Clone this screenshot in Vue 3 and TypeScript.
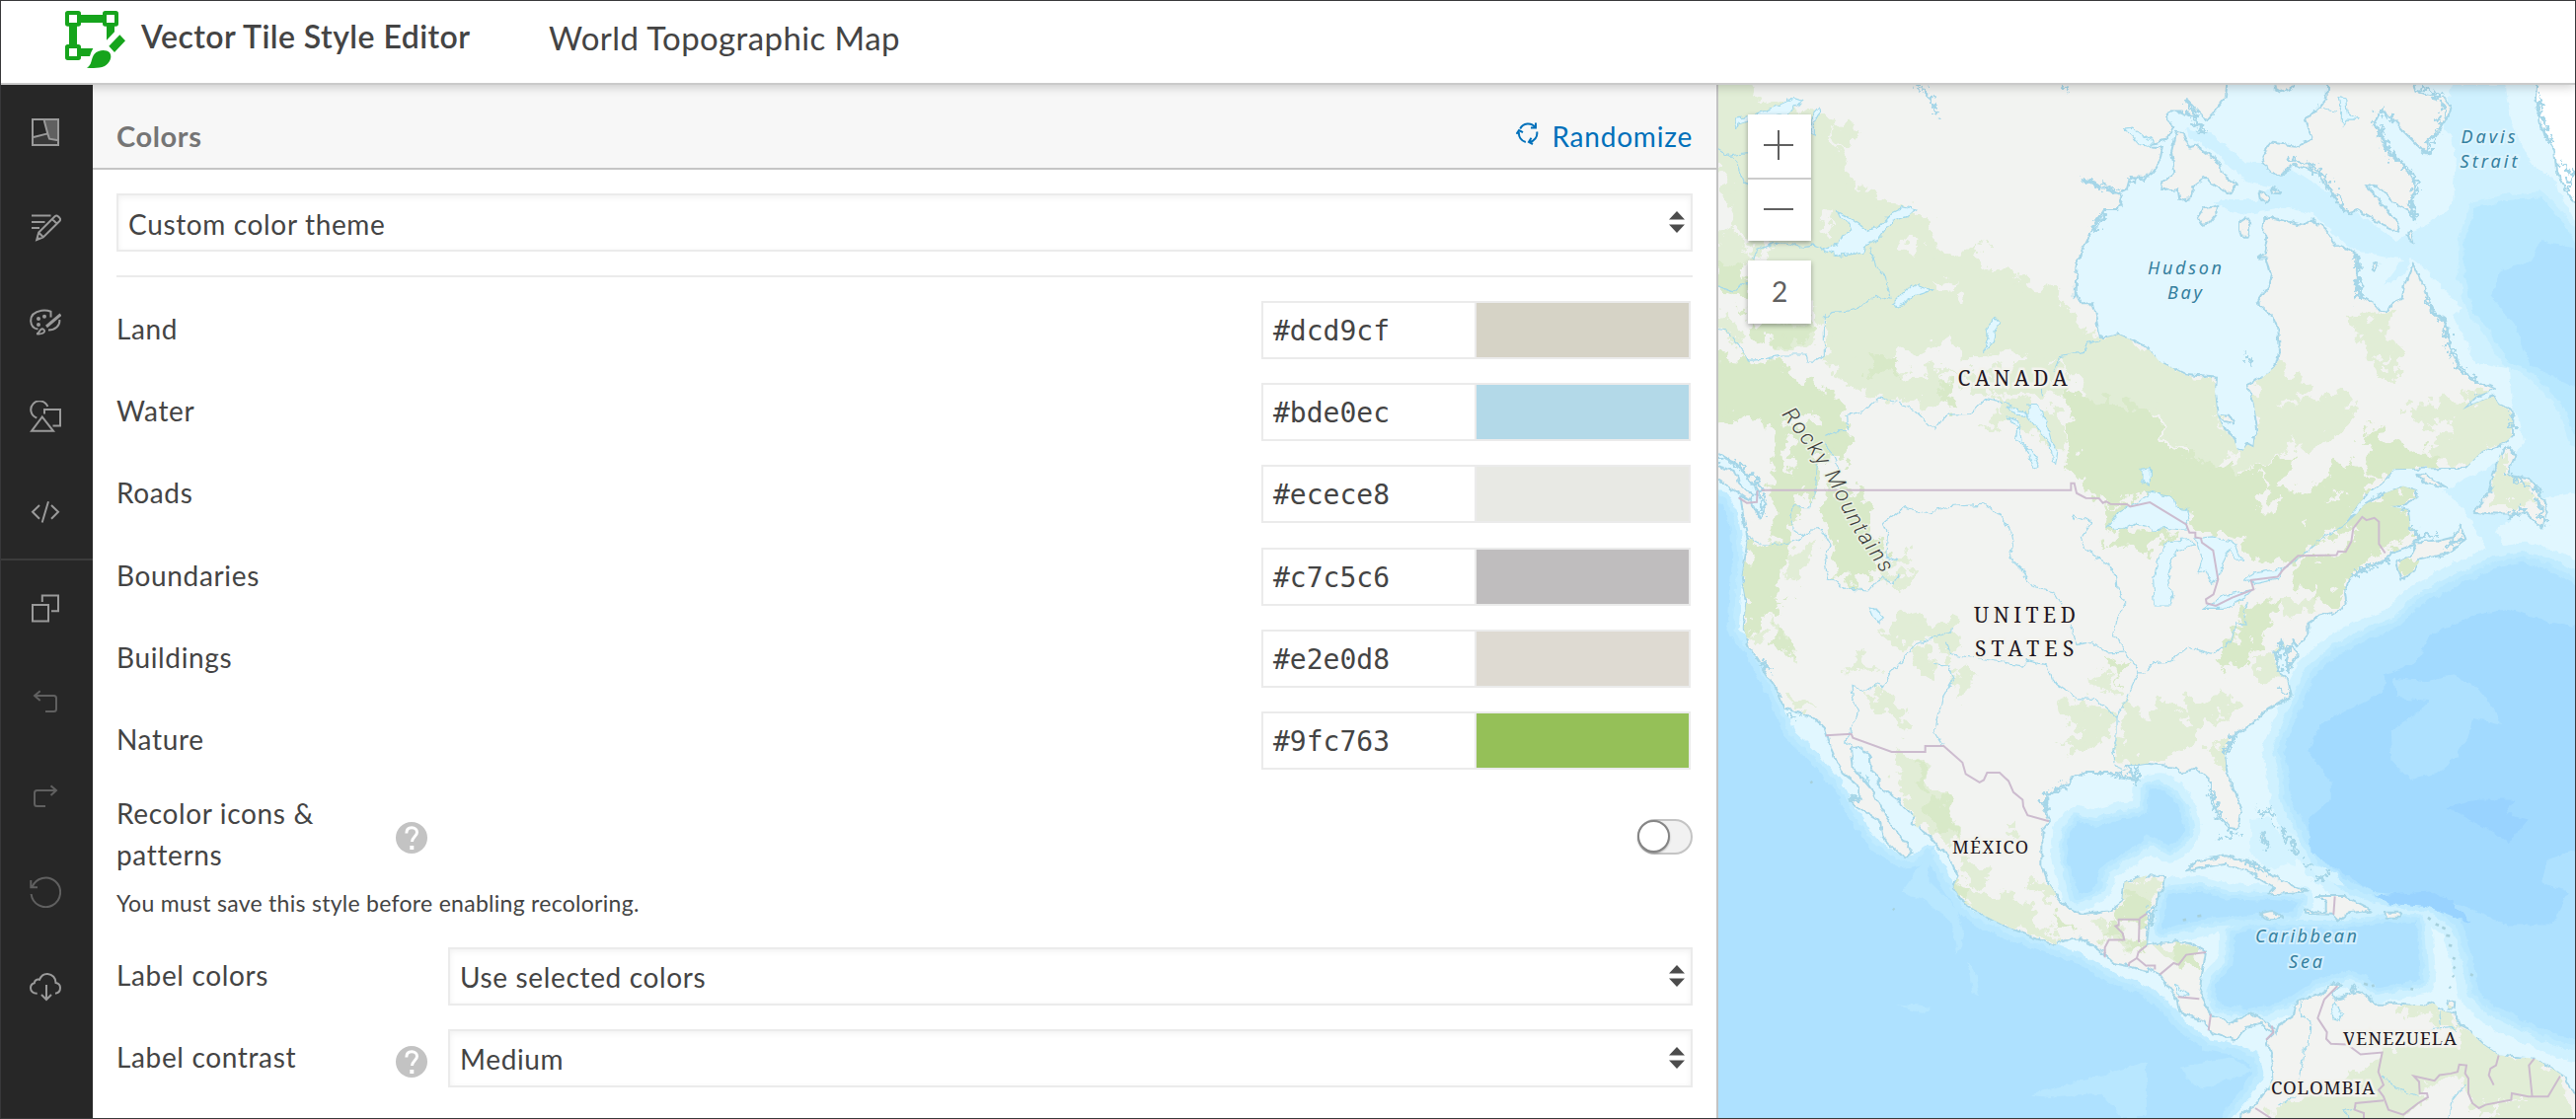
<script setup lang="ts">
interface ColorRow { name: string; hex: string; swatch: string }
interface MapLabel { text: string; x: number; y: number; width: number; size: number; kind: 'country' | 'water' }
interface Shape { d: string }

const colorRows: ColorRow[] = [
  { name: 'Land', hex: '#dcd9cf', swatch: '#d6d3c6' },
  { name: 'Water', hex: '#bde0ec', swatch: '#b3d9e8' },
  { name: 'Roads', hex: '#ecece8', swatch: '#e8e9e4' },
  { name: 'Boundaries', hex: '#c7c5c6', swatch: '#bfbdbe' },
  { name: 'Buildings', hex: '#e2e0d8', swatch: '#dedad2' },
  { name: 'Nature', hex: '#9fc763', swatch: '#95c058' },
]

// Map geometry is stored per tile (1305 x 1568 units) and joined into world coordinates.
type Tile = 'nw' | 'ne' | 'sw' | 'se'
const origin: Record<Tile, [number, number]> = { nw: [0, 0], ne: [1305, 0], sw: [0, 1568], se: [1305, 1568] }
function ring(...parts: [Tile, string][]): string {
  return parts
    .flatMap(([tile, pts]) => pts.trim().split(/\s+/).map((p) => {
      const [x, y] = p.split(',').map(Number)
      return `${x + origin[tile][0]},${y + origin[tile][1]}`
    }))
    .join(' ')
}
const each = (tile: Tile, list: string[]): Shape[] => list.map((pts) => ({ d: ring([tile, pts]) }))

const northShelf = ring(['ne', '120,130 200,150 300,235 420,240 560,330 640,390 760,470 860,420 930,360 940,200 900,110 930,0 1090,0 1110,120 1170,240 1240,290 1305,420 1305,1240 1180,1260 1060,1350 1100,1440 1060,1460 960,1280 900,1230 1000,1180 1110,1130 1150,1080 1110,960 1100,860 1000,840 930,700 960,680 850,560 800,520 780,580 720,610 780,530 620,500 560,440 500,390 430,370 300,395 250,380 200,350 330,350 380,310 300,290 200,200 130,160'])
const northDeep = ring(['ne', '1000,370 1100,350 1200,342 1270,420 1305,480 1305,1080 1270,980 1180,880 1090,830 1040,740 990,680 965,580 965,470'])
const northDeeper = ring(['ne', '1200,470 1310,500 1310,920 1170,850 1120,730 1045,640 1080,560 1170,535'])
const pacific = ring(
  ['nw', '-80,1240 20,1260 45,1330 55,1420 45,1568'],
  ['sw', '40,90 90,150 145,250 215,410 300,490 360,560 400,640 470,740 560,800 610,790 640,760 690,860 750,950 880,1015 1000,1055 1100,1090 1200,1150 1305,1190'],
  ['se', '60,1240 100,1290 180,1350 260,1365 320,1390 330,1430 290,1490 230,1568'],
  ['sw', '1500,1700 -80,1700'],
)
const atlantic = ring(
  ['ne', '830,1568 960,1500 1060,1455 1150,1440 1240,1470 1400,1560'],
  ['se', '1400,1360 1240,1320 1150,1280 1050,1230 1000,1180 980,1080 950,980 880,920 700,890 600,850 530,790 490,720 430,600 420,500 405,450 440,370 480,270 510,210 580,150 680,100 760,70'],
)
const atlanticDeep = ring(['se', '820,180 860,100 1000,40 1100,20 1220,60 1320,80 1320,750 1220,780 1200,850 1280,880 1230,980 1100,980 900,900 690,880 500,760 490,660 560,600 560,550 490,450 530,370 720,270 725,220'])
const atlanticRise = ring(['se', '740,390 820,340 860,300 760,290 750,230 850,240 930,225 1000,250 1060,330 1080,370 990,350 980,400 940,470 880,520 800,540 745,480'])
const trenches = each('se', [
  '910,620 1000,600 1120,600 1090,640 1160,660 1100,730 1060,700 960,650',
  '690,890 860,878 930,910 990,975 940,960 850,925 740,915',
])
const gulf = ring(
  ['sw', '1090,660 1150,672 1230,650 1305,640'],
  ['se', '0,565 40,560 85,590 110,630 125,690 100,730 70,750 30,725 0,715'],
  ['sw', '1305,725 1240,765 1170,810 1165,860 1130,885 1090,895 1070,820 1055,760 1062,700'],
)
const basins = each('se', [
  '60,880 150,870 250,895 380,900 470,905 450,945 330,955 200,965 100,985 40,1000 45,940',
  '260,1000 340,985 420,985 600,985 720,965 825,965 832,1050 838,1150 700,1175 660,1140 610,1125 560,1140 520,1150 430,1210 370,1230 300,1240 215,1225 200,1180 215,1140 255,1100 260,1060',
])

const mainland = ring(
  ['nw', '-20,-20 1305,-20'],
  ['ne', '245,-20 240,40 215,70 185,105 160,90 120,45 150,100 110,82 62,82 65,108 82,125 60,165 0,185 48,190 40,230 0,282'],
  ['nw', '1255,278 1245,315 1225,325 1105,285 1170,315 1222,330 1232,360 1210,380 1175,380 1130,455 1115,485 1090,550 1088,640 1100,662 1143,662 1168,770 1220,757 1305,795'],
  ['ne', '40,840 120,880 210,887 207,930 215,1000 235,1045 265,1075 275,1105 292,1110 305,1090 325,1100 327,1078 340,1050 325,960 303,910 350,890 395,850 405,810 400,740 385,705 335,660 370,610 378,575 365,525 340,525 360,510 370,465 352,440 355,405 375,400 430,415 475,425 502,405 545,440 580,490 640,515 638,600 650,640 685,660 710,690 735,688 750,660 775,650 785,600 810,540 850,630 870,690 910,720 920,790 960,870 1000,895 1062,922 1000,945 960,985 1000,965 1055,945 1070,970 1115,990 1113,1060 1090,1085 1020,1110 970,1160 880,1162 750,1165 725,1200 680,1230 640,1275 600,1335 640,1300 660,1275 720,1240 780,1217 820,1230 818,1255 775,1275 740,1278 795,1290 800,1340 830,1370 812,1395 740,1420 725,1440 680,1460 620,1490 600,1540'],
  ['se', '605,5 590,25 520,45 490,65 490,100 462,135 445,110 455,160 430,215 422,150 410,115 400,150 385,150 405,220 430,240 440,285 370,325 320,370 260,410 237,465 245,520 270,580 285,640 275,690 250,685 215,640 195,590 195,545 150,503 110,520 90,500 0,490'],
  ['sw', '1240,500 1280,540 1220,530 1190,518 1120,518 1080,530 1060,555 1000,590 1000,640 1008,665 988,690 988,800 1005,850 1040,900 1070,930 1105,948 1190,935 1230,905 1238,850 1305,830'],
  ['se', '55,832 50,860 35,890 22,940 5,990 0,1040 90,1030 130,1035 180,1062 168,1130 160,1190 190,1245 250,1280 310,1250 370,1275 395,1310 400,1285 440,1260 455,1210 525,1190 570,1155 592,1160 565,1185 575,1205 640,1185 680,1200 690,1220 760,1220 850,1225 870,1215 900,1240 940,1250 950,1285 980,1300 1020,1340 1070,1375 1180,1385 1240,1420 1270,1440 1330,1530 1330,1600 285,1600 290,1550 330,1530 360,1490 385,1450 382,1380 365,1330 385,1310 350,1280 300,1290 270,1330 200,1305 180,1275 100,1245 90,1200 40,1130 0,1110'],
  ['sw', '1305,1120 1250,1105 1205,1095 1150,1045 1100,1020 1075,1020 1030,1038 960,1018 870,980 800,945 740,905 718,865 730,830 710,785 650,715 590,670 595,650 550,600 495,560 465,490 465,465 430,440 405,445 410,500 470,570 500,630 545,700 590,760 570,778 500,710 490,660 430,625 400,595 430,600 430,560 380,520 345,440 325,380 290,350 205,322 190,280 155,225 100,140 80,80 88,0'],
  ['nw', '75,1500 92,1380 70,1250 100,1260 130,1320 145,1270 120,1230 60,1150 -20,1110'],
)

const islands: Shape[] = [
  ...each('ne', [
    '550,-20 548,35 520,70 480,110 505,165 450,185 375,175 352,215 365,260 405,272 450,245 520,265 560,325 610,390 640,380 700,415 765,445 770,430 700,340 665,305 705,310 750,355 800,385 815,408 800,360 820,310 800,260 740,205 700,130 690,110 720,75 770,130 850,210 855,170 890,140 925,75 900,40 820,20 810,-20',
    '385,-20 390,10 410,22 440,12 455,-20',
    '90,140 75,200 85,265 45,300 50,320 95,315 100,350 130,345 150,300 180,280 250,330 275,300 230,270 225,240 150,185 130,190 110,145',
    '155,405 175,375 220,365 215,390 190,420 165,425',
    '285,440 285,415 300,405 313,425 305,460 290,460',
    '340,325 360,330 372,345 360,353 345,343',
    '380,313 395,318 403,330 385,328',
    '1100,1095 1080,1110 1040,1230 1060,1215 995,1295 1060,1300 1150,1300 1200,1345 1220,1300 1200,1240 1160,1195 1100,1185 1120,1120',
    '760,1450 775,1495 820,1470 830,1440 900,1425 970,1380 940,1370 880,1385 820,1390 800,1430',
    '925,1390 955,1335 970,1375',
    '820,1182 850,1185 910,1222 850,1210',
    '220,1002 250,1005 265,1028 235,1020',
    '683,560 690,540 703,542 690,565',
    '790,450 800,445 812,480 795,470',
  ]),
  ...each('nw', ['-20,1150 50,1170 65,1210 110,1245 100,1262 60,1235 -20,1185']),
  ...each('se', [
    '120,815 155,785 240,770 320,790 380,830 485,878 370,887 390,865 330,830 240,795 160,805',
    '480,935 545,940 545,905 515,892 600,892 685,935 610,945 580,968 560,948 480,945',
    '345,945 380,937 415,955 380,962',
    '725,942 775,942 770,957 725,957',
    '912,1215 937,1210 935,1235 918,1232',
    '622,1175 628,1160 636,1175 628,1185',
    '345,715 355,698 365,740',
  ]),
]
const greenland = ring(['ne', '1190,-20 1185,40 1195,100 1210,150 1240,200 1245,260 1275,320 1330,400 1330,-20'])

// Heavily indented shores, drawn as a thick ragged line.
const fjords: Shape[] = [
  ...each('ne', [
    '690,110 715,150 730,200 790,250 825,300 805,350 815,405',
    '700,80 740,100', '430,215 470,240 520,255 550,300 590,360 620,390', '830,10 880,30 910,70 885,140 850,205',
    '640,520 645,630 635,655', '850,650 870,690 905,720 920,790 950,860 1000,895', '1113,990 1110,1050', '1100,1180 1140,1205 1190,1230 1195,1300 1215,1330', '800,1340 830,1370 880,1370',
    '630,1480 730,1440', '905,1400 965,1375', '1195,30 1200,90 1225,170', '1255,230 1290,260 1280,330', '120,45 150,110 175,150', '300,820 315,840', '1100,1310 1150,1290',
  ]),
  ...each('nw', ['610,0 650,40 668,98', '1040,0 1065,15', '1110,287 1215,322', '1175,395 1135,450', '0,1130 60,1150 120,1200 135,1260 135,1310', '1245,290 1300,280']),
  ...each('se', ['405,120 400,210', '400,260 430,280', '430,130 425,210', '195,570 215,640 245,685', '330,640 380,635 385,655', '400,680 440,730 460,770', '480,790 500,795', '505,845 560,820', '240,455 265,410', '225,715 275,700', '300,785 375,825', '20,920 5,980', '355,715 370,745']),
  ...each('sw', ['1000,640 995,590 1060,555', '1200,520 1280,540 1270,500', '140,180 160,215', '400,595 440,600', '215,345 245,345']),
]

const lakes: Shape[] = [
  ...each('nw', [
    '120,88 190,60 232,40 262,50 235,65 215,92 130,95',
    '52,105 75,102 95,90 95,110 65,120 62,132',
    '290,90 308,70 312,90 295,120 295,150 285,145',
    '365,385 410,408 455,440 490,430 530,385 560,370 605,380 575,400 530,415 490,470 445,490 440,510 370,518 320,500 365,485 380,455 410,440 400,415 375,405',
    '530,665 570,625 590,605 655,622 600,640 550,670',
    '808,810 825,770 813,745 845,705 858,720 840,750 835,780',
    '945,965 970,965 1000,1020 1015,1080 1035,1110 1028,1150 1015,1145 1012,1090 975,1045 945,1010',
    '878,1005 915,1020 925,1080 955,1110 978,1155 960,1165 940,1100 905,1070 915,1040',
    '878,975 930,990 945,1005 905,1000',
    '1240,135 1262,132 1320,170 1320,190 1285,185',
    '1290,1165 1315,1160 1315,1215 1290,1200',
  ]),
  ...each('sw', ['463,18 480,20 505,48 490,60 475,45', '447,525 463,545 455,550']),
  { d: ring(['nw', '1183,1340 1215,1300 1260,1275 1305,1250'], ['ne', '0,1235 30,1240 75,1245 85,1280 122,1285 130,1320 115,1350 60,1345 20,1350 0,1335'], ['nw', '1270,1330 1240,1348']) },
  ...each('ne', [
    '45,1410 60,1385 130,1378 145,1392 100,1410 75,1450 62,1500 78,1550 70,1580 25,1580 20,1500',
    '150,1375 200,1370 270,1390 290,1440 270,1440 250,1410 230,1450 215,1500 200,1515 180,1470 155,1480 170,1440',
    '300,1500 330,1480 415,1465 400,1500 330,1512',
    '175,1590 240,1545 325,1530 300,1555 230,1590',
    '585,40 605,45 610,85 650,105 610,105 595,125 595,85',
  ]),
  ...each('se', ['560,1240 575,1215 593,1250 585,1268 568,1262', '85,1165 115,1180 125,1195 95,1190']),
]

const lightForest: Shape[] = [
  { d: ring(
    ['nw', '-20,-20 90,-20 130,60 320,90 350,190 410,310 540,370 640,400 660,510 740,530 790,480 810,560 950,610 1040,650 1100,740 1165,775 1220,757 1305,800'],
    ['ne', '120,885 208,890 213,1010 275,1105 220,1140 160,1160 100,1120 50,1020 0,970'],
    ['nw', '1220,980 1140,970 1110,900 1040,830 960,850 900,790 780,830 700,770 600,800 500,810 420,850 350,850 330,740 290,640 130,640 100,480 60,420 20,250 -20,200']) },
  { d: ring(['sw', '1260,320 1305,350'], ['se', '50,310 150,320 250,290 270,330 150,380 130,430 40,480 0,485'], ['sw', '1230,480 1215,440']) },
  ...each('nw', [
    '350,130 430,125 425,165 370,170', '380,860 470,830 560,880 680,870 700,960 640,970 540,940 400,920',
    '810,1040 880,1000 850,950 930,960 1000,980 1060,1040 1060,1100 1020,1100 960,1040 900,1020', '720,880 850,870 980,830 1060,880 1050,920 820,930',
    '0,440 50,450 90,520 60,560 0,550', '200,1440 250,1410 300,1400 260,1460 230,1490', '510,1500 600,1490 570,1530', '520,1440 580,1420 570,1450', '0,700 80,750 60,780 0,740', '180,700 280,700 290,790 170,780',
  ]),
  ...each('ne', [
    '340,910 400,860 480,920 440,970 520,970 600,930 625,970 590,1040 500,1100 440,1060 400,1130 330,1150 260,1170 340,1050 325,960',
    '640,720 700,700 735,700 720,780 780,800 760,870 730,890 700,850 700,820 660,790',
    '790,980 900,965 1050,948 1100,990 1105,1060 1020,1105 960,1150 900,1140 860,1110 940,1060 860,1040 810,1010',
    '1090,1110 1060,1210 1040,1270 1150,1270 1180,1250 1130,1200 1090,1180',
  ]),
  ...each('sw', [
    '170,70 200,90 225,170 190,120', '510,80 560,50 640,70 720,60 740,140 690,150 650,90 580,130', '430,160 445,190 490,200 410,205',
    '470,280 520,290 590,375 510,340', '600,140 640,160 650,220 620,200', '730,210 780,225 735,270', '545,470 630,500 640,570 690,620 730,720 760,780 820,830 780,850 740,760 660,690 590,630',
    '735,840 780,890 860,890 940,920 980,980 1040,1030 960,1010 880,980 800,940 750,900', '1240,850 1300,835 1300,910 1240,900', '1050,300 1180,320 1200,380 1120,450 1060,430 1110,400 1050,340',
    '210,290 280,320 240,325', '1130,235 1180,220 1200,270 1160,260', '945,830 1020,890 980,880', '885,680 920,710 900,700', '100,90 135,110 105,125', '1160,975 1230,990 1240,1050 1200,1030',
  ]),
  ...each('se', [
    '320,180 390,150 400,220 350,230', '390,0 530,0 450,40', '210,430 235,430 225,520', '0,850 40,850 20,900 0,910', '40,1060 90,1050 150,1090 110,1100',
    '720,1360 930,1350 960,1300 1010,1330 1070,1375 1180,1390 1240,1420 1250,1440 1220,1500 1110,1500 1010,1535 980,1480 960,1430 900,1450 830,1450 850,1500 800,1540 730,1600 400,1600 400,1520 560,1500 650,1430 710,1400',
    '1250,1440 1300,1600 1030,1600 1080,1530 1220,1500', '770,1232 870,1220 900,1245 830,1245', '890,1240 945,1260 945,1285 900,1280',
  ]),
]
const darkForest: Shape[] = [
  { d: ring(
    ['nw', '1070,910 1110,965 1200,965 1305,990'],
    ['ne', '30,1040 60,1100 150,1140 300,1190 330,1170 440,1140 430,1180 380,1200 470,1250 560,1190 570,1150 640,1170 680,1210 600,1330 520,1370 460,1430 350,1440 300,1400 270,1360 200,1350 130,1330 120,1285 85,1280 75,1245 0,1230'],
    ['nw', '1285,1250 1200,1262 1150,1250 1110,1210 1085,1170 1080,1050 1060,980']) },
  { d: ring(['nw', '1190,1390 1210,1355 1305,1355'], ['ne', '80,1355 50,1375 0,1410'], ['nw', '1240,1385']) },
  ...each('nw', [
    '-20,830 120,840 180,850 190,870 260,890 330,970 330,900 370,980 400,1080 390,1140 330,1100 300,1120 290,1200 240,1280 200,1400 170,1568 80,1568 100,1400 170,1390 170,1120 180,1060 130,1000 -20,1010',
    '340,1230 430,1240 470,1290 460,1360 510,1400 430,1500 380,1500 360,1420 330,1320', '0,540 80,570 90,640 0,610', '110,730 290,740 260,770 130,780', '90,600 95,670 75,650', '680,910 705,920 710,975 685,970', '1180,1280 1260,1285 1200,1330',
    '480,820 530,830 540,880 470,860',
  ]),
  ...each('ne', [
    '660,1080 685,1050 770,1100 880,1120 880,1160 750,1160 700,1200 670,1160 690,1110',
    '600,1350 640,1300 720,1245 800,1225 815,1250 740,1280 795,1300 800,1360 740,1400 700,1390 690,1440 620,1470 560,1568 520,1568 515,1450 600,1420 640,1360',
    '440,1480 500,1440 510,1500 460,1520', '770,1450 820,1430 815,1470 780,1490',
  ]),
  ...each('sw', ['90,0 200,0 150,40 120,60 105,80 85,80', '180,75 210,120 222,165 185,120', '640,600 690,620 715,700 660,690', '600,490 630,520 630,580', '1190,180 1240,200 1220,240', '1220,920 1270,890 1305,910 1290,960 1215,955', '1200,970 1225,1000 1190,1010', '1020,955 1075,990 1040,1000', '735,850 760,870 740,890', '1230,1030 1280,1040 1250,1050']),
  ...each('se', ['280,10 390,0 380,60 330,130 260,200 215,190 250,100 300,80', '80,1040 130,1045 155,1090 110,1110']),
]
// Open clearings inside the forest belts.
const clearings: Shape[] = [
  ...each('nw', ['550,510 570,460 595,455 615,510 580,520', '670,610 750,590 730,635', '120,500 160,500 150,530 120,530', '200,1010 290,990 300,1030 230,1040', '215,1060 240,1080 225,1200 200,1110', '310,400 340,390 360,430 320,440', '110,1290 150,1340 130,1400']),
  ...each('ne', ['340,1240 385,1230 375,1300 340,1300', '540,1235 600,1240 580,1265', '80,1080 115,1110 100,1130', '860,1025 930,1030 940,1060 880,1060', '190,1010 215,1020 235,1050', '480,1330 500,1310 480,1360', '395,960 440,950 440,975', '710,840 745,820 730,850', '330,1190 370,1200 360,1230']),
  ...each('se', ['100,330 150,360 130,390', '250,110 290,100 275,130', '200,330 230,330 220,350']),
]

const rivers: Shape[] = [
  ...each('nw', [
    '0,190 40,215 60,235 80,290 95,310', '40,212 95,205', '0,610 50,628 75,600 95,605', '0,740 30,745 95,832 150,830 190,820 265,820 270,838 300,838 325,820 325,710 345,690 405,685 445,668 480,635 525,650 515,585 485,555 460,495',
    '110,530 120,500 175,480 210,478 250,492 290,485 325,498', '1168,772 1130,785 1110,812 1040,825 1020,870', '985,925 990,950',
    '325,1070 355,1050 398,1048 395,1000 445,990 490,952 550,965 600,990 660,1048 700,1000 770,998 815,950 870,962 900,975', '320,1085 350,1120 370,1165',
    '305,1130 300,1210 285,1280 230,1280 218,1305 232,1345 265,1370 285,1350 320,1348 345,1395 325,1455 335,1495 400,1530 460,1535 500,1490 535,1510 553,1483', '92,1370 140,1395 210,1390 265,1370',
    '550,1442 515,1430 520,1370 503,1330 565,1280 635,1300 700,1280 810,1272 865,1305 890,1350 900,1400 888,1435 930,1475 960,1520 1020,1535 1040,1568',
    '1080,1320 1085,1305 1140,1325 1105,1370 1115,1408 1190,1455 1210,1485 1215,1530 1245,1568',
  ]),
  ...each('sw', [
    '1040,0 1080,90 1095,130 1140,120 1180,152 1240,150', '1245,0 1218,40 1205,100 1240,145 1280,215 1250,280 1215,350 1215,420 1200,460 1210,500 1240,510', '1280,215 1305,215',
    '712,75 710,90 640,115 600,130 530,215 505,260 480,250 450,270 408,258 415,300 428,335 410,385 392,425 412,440', '655,190 700,195 718,235 683,295 662,395 685,432', '695,120 710,158 820,175 925,192 940,175 1000,188 1015,235 1095,292 1150,295 1215,350',
  ]),
  ...each('se', ['0,210 20,185 70,180 125,135 205,158 260,110 270,65 300,70 295,30 310,0', '465,1210 470,1260 498,1275 492,1345 478,1360 462,1450', '860,1295 930,1288 945,1300', '720,1440 760,1475 820,1500', '970,1460 930,1510 920,1568', '400,1530 440,1500 470,1500', '610,1568 600,1540 640,1530', '890,1240 895,1280']),
  ...each('ne', ['525,68 585,80', '600,1335 520,1385 470,1430 415,1468']),
]

const borders: Shape[] = [
  { d: ring(['nw', '135,1229 1075,1229 1075,1208 1085,1208 1092,1238 1120,1253 1160,1254 1172,1268 1182,1263 1195,1271 1245,1272 1255,1279 1305,1268'], ['ne', '10,1266 120,1333 130,1358 148,1358 148,1372 165,1375 168,1388 202,1412 217,1500 203,1545 180,1560 182,1572 210,1580 260,1555 325,1530 317,1502 398,1492 415,1470 460,1428 577,1426 582,1415 605,1416 622,1385 628,1345 655,1310 668,1320 692,1313 706,1325 706,1392 725,1420']) },
  ...each('nw', ['65,1252 90,1268 120,1265 122,1230']),
  ...each('sw', ['330,405 407,400 412,412 530,455 632,455 632,437 688,437 745,487 755,522 797,547 810,540 820,518 858,518 885,543 900,577 928,600 930,620 943,647 1008,665', '1178,1078 1178,1048 1190,1025 1237,1025 1232,1005 1210,983 1220,980 1220,963 1283,963 1281,1032', '1283,960 1305,945', '1250,1105 1252,1095 1275,1080 1305,1105', '1275,1080 1280,1062 1305,1042']),
  ...each('se', [
    '0,1103 25,1103 25,1115', '40,1130 82,1095 97,1100 120,1070 180,1062', '95,1198 160,1204', '195,1250 188,1300', '380,1285 385,1305 363,1328', '572,893 568,948',
    '580,1165 540,1205 520,1262 548,1305 546,1325 560,1340 610,1342 650,1372 716,1366 704,1425 720,1465 705,1480 720,1500 735,1540 780,1555 825,1520 855,1502 852,1490 830,1490 828,1455 812,1438 875,1452 890,1435 925,1430 945,1425 950,1403 972,1405 968,1430 978,1445 978,1490 990,1520 1010,1535 1030,1525 1108,1510 1110,1490 1160,1500 1220,1500 1257,1438',
    '720,1512 635,1520 632,1540 660,1550 660,1568', '330,1535 378,1566', '1070,1375 1062,1405 1045,1415 1040,1435 1055,1465', '1178,1385 1162,1405 1172,1502',
  ]),
]

const labels: MapLabel[] = [
  { text: 'CANADA', x: 243.5, y: 305, width: 111, size: 21, kind: 'country' },
  { text: 'UNITED', x: 260, y: 545, width: 103, size: 21, kind: 'country' },
  { text: 'STATES', x: 261, y: 579, width: 100.5, size: 21, kind: 'country' },
  { text: 'MÉXICO', x: 238, y: 779, width: 77, size: 18, kind: 'country' },
  { text: 'VENEZUELA', x: 634, y: 972.5, width: 115, size: 18.5, kind: 'country' },
  { text: 'COLOMBIA', x: 561, y: 1023, width: 105, size: 18.5, kind: 'country' },
  { text: 'Davis', x: 753.5, y: 59, width: 55, size: 18, kind: 'water' },
  { text: 'Strait', x: 752.5, y: 84, width: 58, size: 18, kind: 'water' },
  { text: 'Hudson', x: 436, y: 191.5, width: 75, size: 18, kind: 'water' },
  { text: 'Bay', x: 456, y: 217, width: 35, size: 18, kind: 'water' },
  { text: 'Caribbean', x: 545, y: 869, width: 103, size: 18, kind: 'water' },
  { text: 'Sea', x: 579, y: 894.5, width: 34, size: 18, kind: 'water' },
]
</script>

<template>
  <div class="app">
    <header class="topbar">
      <svg class="logo" viewBox="0 0 300 252">
        <path fill="#16a41c" d="M38 33h32q8 0 8 8v4h66v-4q0-8 8-8h32q8 0 8 8v31q0 8-8 8h-4v17l-24 25V80h-4q-8 0-8-8v-3H78v3q0 8-8 8h-4v55h4q8 0 8 8v4h37q-6 10-10 24H78v4q0 8-8 8H38q-8 0-8-8v-32q0-8 8-8h4V80h-4q-8 0-8-8V41q0-8 8-8z" />
        <path fill="#16a41c" d="M196 106l17 18-33 35-17-19zM96 206c16-8 12-28 23-42 12-13 36-14 46-4 10 14 0 32-15 41-16 7-34 6-54 5z" />
        <path fill="#fff" d="M42 45h24v24H42zM156 45h24v24h-24zM42 147h24v24H42z" />
      </svg>
      <h1>Vector Tile Style Editor</h1>
      <span class="map-title">World Topographic Map</span>
    </header>

    <div class="main">
      <nav class="rail">
        <div class="tools">
          <button><svg viewBox="0 0 32 32"><path class="area" d="M14.7 4 18.3 17.4 20 22.7 29 24.3V4z" /><path class="area low" d="M3 21 18.3 17.4 20 22.7 29 24.3V29H3z" /><path d="M3 3h26v26H3zM14.7 4l3.6 13.4L4 21M18.3 17.4 20 22.7l9 1.6" /></svg></button>
          <button><svg viewBox="0 0 32 32"><path d="M2 4.5h19.5M2 11h13.5M2 17h8M7.2 29l2-7.4L25.6 5.2q1.7-1.4 3.2 0l1.6 1.6q1.4 1.6 0 3.2L13.8 26.4zM22.8 8l5 4.8M9.3 21.7l4.5 4.6M7.5 26.5l2 1.6" /></svg></button>
          <button><svg viewBox="0 0 32 32"><path d="M21.5 11.5V5.8Q17 4 12 4.8C5 6 1 10 1.200 15.500 1.500 20 4 23 8.500 23.500M30.300 14C31 20 26 24.500 19 24.500M7 28.300c3 0 2.800-4.500 5.500-5 1.500 0 2.800 1.200 2.500 2.700-.8 2.200-4.500 2.600-8 2.300z" /><path class="brush" d="M31.500 8.700 17 21" /><g class="dots"><circle cx="9" cy="13" r="2" /><circle cx="15" cy="10.700" r="2" /><circle cx="9" cy="19" r="2" /></g></svg></button>
          <button><svg viewBox="0 0 32 32"><path d="M7.300 17.500A8.800 8.800 0 1 1 18.300 6M15 13.500V9h16v16.500h-7.500M12.700 16.500 2 30.800h22z" /></svg></button>
          <button><svg viewBox="0 0 32 32"><path d="M10 10 3 16.700l7 7M22 10l7 6.700-7 7M19 6.300 12.700 27.500" /></svg></button>
        </div>
        <div class="tools">
          <button><svg viewBox="0 0 32 32"><path d="M3 13h16v16.500H3zM12.800 10V3.500H29v15.700h-7" /></svg></button>
          <button class="off"><svg viewBox="0 0 32 32"><path d="M10.700 4.200 5 9l5.700 5M5 9h19.500q2.500 0 2.500 2.500v11q0 2.500-2.500 2.500H16" /></svg></button>
          <button class="off"><svg viewBox="0 0 32 32"><path d="M21.500 4.200 27 9l-5.500 5M27 9H7.500Q5 9 5 11.500v11Q5 25 7.500 25H16" /></svg></button>
          <button class="off"><svg viewBox="0 0 32 32"><path d="M1.600 18A14.800 14.800 0 1 0 2.500 11M1.300 4v7.200H8" /></svg></button>
          <button><svg viewBox="0 0 32 32"><path d="M7.700 22.800C3.500 23 1 20.500 1 17.300c0-3 1.800-4.500 3.800-5C5 9.200 7.500 8 10 8.800 11.800 4.600 15 2.800 18.200 3c5 .3 8.300 4 8.300 9 3 .6 4.500 2.400 4.500 5 0 3.400-2 5.400-5 5.800M17 14v14.700M12 24l5 5 5-5" /></svg></button>
        </div>
      </nav>

      <section class="panel">
        <div class="panel-head">
          <h2>Colors</h2>
          <a class="randomize">
            <svg viewBox="0 0 24 24"><path d="M4.200 7.500A9 9 0 0 1 19.500 6M20 1.500V6.500h-5M21.200 10.500A9 9 0 0 1 13.500 21M17 23l-4-2.200 2.500-4M9.800 21A9 9 0 0 1 3 11M.5 12.800 3 9l4 2.200" /></svg>
            Randomize
          </a>
        </div>
        <div class="panel-body">
          <div class="select">Custom color theme<svg class="arrows" viewBox="0 0 16 22"><path d="M8 0l8 8.500H0zM8 22l8-8.500H0z" /></svg></div>
          <hr />
          <div class="colors">
            <div v-for="row in colorRows" :key="row.name" class="color-row">
              <label>{{ row.name }}</label>
              <div class="color-field">
                <span class="hex">{{ row.hex }}</span>
                <span class="swatch" :style="{ background: row.swatch }"></span>
              </div>
            </div>
          </div>
          <div class="recolor">
            <label>Recolor icons &amp; patterns</label>
            <svg class="help" viewBox="0 0 32 32"><circle cx="16" cy="16" r="16" /><path d="M10.800 11.500C10.800 7.500 13 5.700 16.200 5.700c3.200 0 5.300 1.900 5.300 4.700 0 4-5 4.800-5 9.600" /><path class="dot" d="M14.300 24h4v4h-4z" /></svg>
            <span class="toggle"><i></i></span>
          </div>
          <p class="note">You must save this style before enabling recoloring.</p>
          <div class="option">
            <label>Label colors</label>
            <div class="select">Use selected colors<svg class="arrows" viewBox="0 0 16 22"><path d="M8 0l8 8.500H0zM8 22l8-8.500H0z" /></svg></div>
          </div>
          <div class="option">
            <label>Label contrast</label>
            <svg class="help" viewBox="0 0 32 32"><circle cx="16" cy="16" r="16" /><path d="M10.800 11.500C10.800 7.500 13 5.700 16.200 5.700c3.200 0 5.300 1.900 5.300 4.700 0 4-5 4.800-5 9.600" /><path class="dot" d="M14.300 24h4v4h-4z" /></svg>
            <div class="select">Medium<svg class="arrows" viewBox="0 0 16 22"><path d="M8 0l8 8.500H0zM8 22l8-8.500H0z" /></svg></div>
          </div>
        </div>
      </section>

      <section class="map">
        <svg class="layer" viewBox="3 0 2604 3133" preserveAspectRatio="none">
          <defs>
            <filter id="coast" filterUnits="userSpaceOnUse" x="-30" y="-30" width="2700" height="3220">
              <feTurbulence type="fractalNoise" baseFrequency="0.035" numOctaves="3" seed="4" />
              <feDisplacementMap in="SourceGraphic" scale="22" xChannelSelector="R" yChannelSelector="G" />
            </filter>
            <filter id="fjord" filterUnits="userSpaceOnUse" x="-30" y="-30" width="2700" height="3220">
              <feTurbulence type="fractalNoise" baseFrequency="0.06" numOctaves="3" seed="9" />
              <feDisplacementMap in="SourceGraphic" scale="55" xChannelSelector="R" yChannelSelector="G" />
            </filter>
            <filter id="ragged" filterUnits="userSpaceOnUse" x="-30" y="-30" width="2700" height="3220">
              <feTurbulence type="fractalNoise" baseFrequency="0.022" numOctaves="5" seed="2" />
              <feDisplacementMap in="SourceGraphic" scale="95" xChannelSelector="R" yChannelSelector="G" />
            </filter>
            <clipPath id="land"><polygon :points="mainland" /><polygon v-for="s in islands" :key="s.d" :points="s.d" /></clipPath>
          </defs>
          <rect x="0" y="0" width="2610" height="3140" fill="#e1f7ff" />
          <g filter="url(#coast)" stroke-linejoin="round">
            <polygon :points="northShelf" fill="#cff1ff" />
            <polygon :points="northDeep" fill="#b8e8ff" stroke="#c4edff" stroke-width="36" />
            <polygon :points="northDeep" fill="#b8e8ff" />
            <polygon :points="northDeeper" fill="#aee1ff" />
            <g v-for="w in [[110, '#cff1ff'], [50, '#c0ebff'], [18, '#b8e7ff']]" :key="w[1]" :stroke-width="w[0]" :stroke="String(w[1])" fill="#aee1ff">
              <polygon v-if="w[0] !== 110" :points="pacific" />
              <polygon :points="atlantic" />
              <polygon :points="gulf" :stroke-width="Number(w[0]) * 0.75" />
              <polygon v-for="s in basins" :key="s.d" :points="s.d" :stroke-width="Number(w[0]) * 0.75" />
            </g>
            <polygon :points="atlanticDeep" fill="#a2daff" />
            <polygon :points="atlanticRise" fill="#aee1ff" />
            <polygon v-for="s in trenches" :key="s.d" :points="s.d" fill="#99d3ff" />
            <path fill="#b8e7ff" d="M560 2450l60-90 40-60-20 110 90 90 20 80-20 60-20-110-90-60zM760 2655l20 20 15 90-20-10zM540 2787l110 10-30 15zM950 3060l200-50 155-50v170h-80l-60-70-130 10zM1400 2980l170-30 60 40-160 60z" />
            <path fill="#d4f3ff" d="M1620 2230l60-10 60 140-70 20-50-60zM1710 2240l60 50-10 80-60-20zM1800 2360l80 30 30 40-80-20z" />
          </g>
          <g filter="url(#coast)" fill="#f2f3f1" stroke="#a6d6e8" stroke-width="6" stroke-linejoin="round">
            <polygon :points="mainland" />
            <polygon v-for="s in islands" :key="s.d" :points="s.d" />
            <polygon :points="greenland" fill="#fff" />
          </g>
          <g clip-path="url(#land)">
            <g filter="url(#ragged)">
              <g fill="#e1edd6" stroke="#e1edd6" stroke-width="16"><polygon v-for="s in lightForest" :key="s.d" :points="s.d" /></g>
              <g fill="#d8e9c8" stroke="#d8e9c8" stroke-width="14"><polygon v-for="s in darkForest" :key="s.d" :points="s.d" /></g>
              <g fill="#f2f3f1"><polygon v-for="s in clearings" :key="s.d" :points="s.d" /></g>
            </g>
          </g>
          <g filter="url(#fjord)" fill="none" stroke="#a6d6e8" stroke-width="11"><polyline v-for="s in fjords" :key="s.d" :points="s.d" /></g>
          <g filter="url(#coast)" fill="none" stroke="#a3d9eb" stroke-width="3.500">
            <polyline v-for="s in rivers" :key="s.d" :points="s.d" />
            <g fill="#e1f7ff"><polygon v-for="s in lakes" :key="s.d" :points="s.d" /></g>
          </g>
          <path d="M2160 2525l8 6m15 14l10 4m10 6l10 4m2 20l12 2m-4 28l10 2m2 36l8 4m-6 24l6 4m-8 22l4 4m-14 30l4 4m60 -42l8 4M1965 2725l12 4m12 4l8-2m110 10l8 2m-700-210l10-2m34-10l12-2M284 2112l4 6m246 380l4 4" stroke="#a6d0dc" stroke-width="8" fill="none" />
          <g class="borders" fill="none" stroke="#cbb9cd" stroke-width="6"><polyline v-for="s in borders" :key="s.d" :points="s.d" /></g>
        </svg>
        <svg class="layer" viewBox="1 0 868 1047">
          <path id="range" d="M65 334C85 361 106 386 123 423S150 468 166 494" fill="none" />
          <text v-for="l in labels" :key="l.text" :class="l.kind" :x="l.x" :y="l.y" :font-size="l.size" :textLength="l.width">{{ l.text }}</text>
          <text class="range"><textPath href="#range">Rocky Mountains</textPath></text>
        </svg>
        <div class="controls">
          <div class="zoom">
            <button><svg viewBox="0 0 30 30"><path d="M0 15h30M15 0v30" /></svg></button>
            <button><svg viewBox="0 0 30 30"><path d="M0 15h30" /></svg></button>
          </div>
          <div class="level">2</div>
        </div>
      </section>
    </div>
  </div>
</template>

<style>
body { margin: 0; }
</style>

<style scoped>
* { box-sizing: border-box; }
.app { width: 2610px; height: 1134px; display: flex; flex-direction: column; overflow: hidden; border: 1px solid #38383a; background: #fff; color: #444; font: 400 28px/42px Lato, "Open Sans", sans-serif; letter-spacing: 0.65px; }
h1, h2, p { margin: 0; }
button { border: 0; padding: 0; background: none; display: flex; align-items: center; justify-content: center; }

.topbar { position: relative; z-index: 1; flex: 0 0 85px; display: flex; align-items: flex-start; padding-left: 55px; background: #fff; border-bottom: 2px solid #cacaca; box-shadow: 0 2px 10px rgba(0, 0, 0, 0.2); }
.logo { width: 100px; height: 84px; margin: -1px -13px 0 0; flex: none; }
h1 { margin-top: 16px; width: 413px; font-size: 32px; font-weight: 600; line-height: 40px; letter-spacing: 0.45px; white-space: nowrap; }
.map-title { margin-top: 17px; font-size: 33px; line-height: 40px; letter-spacing: 0.4px; }

.main { flex: 1; display: flex; min-height: 0; }
.rail { position: relative; z-index: 2; flex: 0 0 93px; background: #272727; }
.tools + .tools { border-top: 2px solid #3b3b3b; }
.tools button { width: 90px; height: 96px; }
.tools svg { width: 32px; height: 32px; fill: none; stroke: #9a9a9a; stroke-width: 2; }
.tools .off svg { stroke: #606060; }
.tools svg .area { fill: #606060; stroke: none; }
.tools svg .low { fill: #3a3a3a; }
.tools svg .brush { stroke-width: 3; }
.tools svg .dots { fill: #9a9a9a; stroke: none; }

.panel { flex: 0 0 1647px; display: flex; flex-direction: column; border-right: 2px solid #c3c3c3; }
.panel-head { flex: 0 0 86px; display: flex; align-items: center; justify-content: space-between; padding: 20px 24px 0; background: #f7f7f7; border-bottom: 2px solid #c5c5c5; }
h2 { font-size: 29px; font-weight: 700; color: #757575; line-height: 42px; letter-spacing: 0.6px; }
.randomize { display: flex; align-items: center; gap: 12px; color: #0070ba; margin-bottom: 1px; letter-spacing: 0.8px; }
.randomize svg { width: 24px; height: 24px; margin-bottom: 5px; fill: none; stroke: currentColor; stroke-width: 2; }
.panel-body { padding: 24px 24px 0; }
.select { height: 59px; flex: 1; display: flex; align-items: center; justify-content: space-between; padding: 2px 6px 0 10px; border: 2px solid #ebebeb; box-shadow: inset 0 2px 6px rgba(0, 0, 0, 0.06); white-space: nowrap; }
.arrows { width: 16px; height: 22px; fill: #4c4c4c; margin-bottom: 3px; }
hr { height: 2px; margin: 24px 0; border: 0; background: #ebebeb; }
.colors { display: flex; flex-direction: column; gap: 24.2px; }
.color-row { height: 59px; display: flex; align-items: center; justify-content: space-between; padding-right: 2px; }
.color-row label { padding-bottom: 3px; }
.color-field { width: 435px; height: 59px; display: flex; border: 2px solid #ebebeb; }
.hex { flex: 0 0 216px; display: flex; align-items: center; padding: 2px 0 0 10px; border-right: 2px solid #ebebeb; font: 28px "DejaVu Sans Mono", monospace; letter-spacing: 0; }
.swatch { flex: 1; }
.recolor { display: flex; align-items: center; margin-top: 23px; }
.recolor label { width: 283px; padding-right: 60px; }
.help { flex: none; width: 32px; height: 32px; fill: none; stroke: #fff; stroke-width: 3; position: relative; top: 4px; }
.help circle, .help .dot { stroke: none; fill: #c3c3c3; }
.help .dot { fill: #fff; }
.toggle { margin: 6px 0 0 auto; width: 56px; height: 36px; border: 2px solid #c4c4c4; border-radius: 18px; background: #f1f1f1; display: flex; align-items: center; }
.toggle i { width: 33px; height: 33px; margin-left: -2px; flex: none; border: 2px solid #858585; border-radius: 50%; background: #fff; box-shadow: 0 1px 2px rgba(0, 0, 0, 0.3); }
.note { margin-top: 13px; font-size: 23px; line-height: 30px; letter-spacing: 0.28px; }
.option { display: flex; align-items: center; margin-top: 30px; }
.option + .option { margin-top: 24px; }
.option label { width: 283px; padding-bottom: 3px; }
.option .select { margin-left: 21px; }
.option label + .select { margin-left: 53px; }

.map { position: relative; flex: 1; background: #e1f7ff; overflow: hidden; }
.layer { position: absolute; left: 0; top: 0; width: 868px; height: 1047px; }
.borders { opacity: 0.95; }
.country { font-family: "Noto Serif", "Liberation Serif", serif; fill: #21161f; stroke: #f2f2ec; stroke-width: 5px; paint-order: stroke; letter-spacing: 0; }
.water { font-family: "Noto Sans", sans-serif; font-style: italic; fill: #34809f; stroke: #e4f6fd; stroke-width: 4px; stroke-opacity: 0.7; paint-order: stroke; letter-spacing: 0; }
.range { font: italic 300 22px Roboto, sans-serif; fill: #3a3c3a; stroke: #eaf1e3; stroke-width: 3px; paint-order: stroke; letter-spacing: 2.1px; }
.controls { position: relative; width: 64px; margin: 30px 0 0 30px; display: flex; flex-direction: column; gap: 20px; }
.zoom, .level { background: #fff; box-shadow: 0 2px 5px rgba(0, 0, 0, 0.35); }
.zoom button { width: 64px; height: 64px; padding: 0 2px 2px 0; }
.zoom button + button { border-top: 2px solid #ccc; }
.zoom svg { width: 30px; height: 30px; stroke: #606060; stroke-width: 2; }
.level { height: 64px; display: flex; align-items: center; justify-content: center; padding-bottom: 2px; color: #606060; font-size: 28px; letter-spacing: 0; }
</style>
